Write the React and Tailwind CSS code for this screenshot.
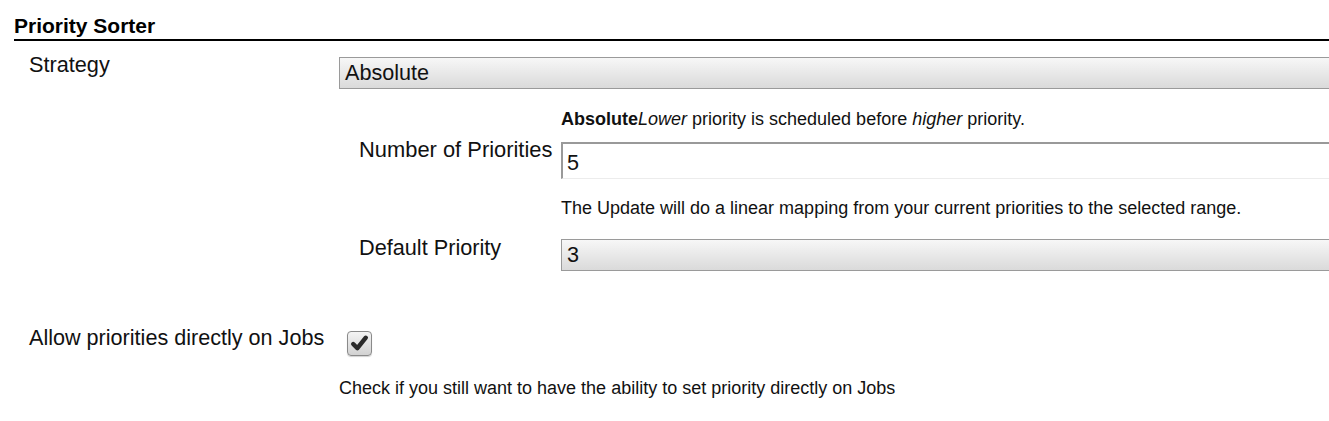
import React from "react";

function Select({ value }) {
  return (
    <div className="h-[32px] flex items-center pl-[5px] pb-[2px] border border-[#9a9a9a] bg-linear-to-b from-[#f7f7f7] to-[#dadada] text-[21.6px] leading-[25px] text-[#111]">
      {value}
    </div>
  );
}

function TextInput({ value }) {
  return (
    <div className="h-[37px] flex items-center pl-[4px] pt-[2px] border-t-2 border-l-2 border-b border-t-[#999] border-l-[#999] border-b-[#ececec] bg-white text-[21.6px] leading-[25px] text-[#111]">
      {value}
    </div>
  );
}

function Checkbox() {
  return (
    <div className="w-[25px] h-[25px] rounded-[4px] border border-[#8a8a8a] bg-linear-to-b from-[#f4f4f4] to-[#d2d2d2] flex items-center justify-center shadow-[0_1px_1px_rgba(0,0,0,0.18)]">
      <svg width="21" height="21" viewBox="0 0 20 20">
        <path d="M4 10.5 L8 14.5 L16 4.5" fill="none" stroke="#2a2a2a" strokeWidth="4.2" strokeLinecap="round" strokeLinejoin="round" />
      </svg>
    </div>
  );
}

export default function App() {
  return (
    <div className="w-[1329px] h-[421px] overflow-hidden bg-white font-['Liberation_Sans',Arial,sans-serif] text-[#111]">
      <div className="w-[1420px] pl-[14px]">
        <div className="pt-[14px] pb-[1px] leading-[24px] text-[21px] font-bold text-black border-b-2 border-black">
          Priority Sorter
        </div>
        <div className="pl-[15px]">
          <div className="flex mt-[11px]">
            <div className="w-[310px] shrink-0 text-[21.7px] leading-[25px]">Strategy</div>
            <div className="flex-1 flex flex-col">
              <div className="mt-[5px]">
                <Select value="Absolute" />
              </div>
              <div className="pl-[20px]">
                <div className="ml-[202px] mt-[20px] text-[18px] leading-[20px]">
                  <b>Absolute</b>
                  <i>Lower</i> priority is scheduled before <i>higher</i> priority.
                </div>
                <div className="flex mt-[8px]">
                  <div className="w-[202px] shrink-0 text-[21.9px] leading-[25px] whitespace-nowrap">Number of Priorities</div>
                  <div className="flex-1 mt-[5px]">
                    <TextInput value="5" />
                  </div>
                </div>
                <div className="ml-[202px] mt-[19px] text-[18px] leading-[20px]">
                  The Update will do a linear mapping from your current priorities to the selected range.
                </div>
                <div className="flex mt-[17px]">
                  <div className="w-[202px] shrink-0 text-[21.7px] leading-[25px]">Default Priority</div>
                  <div className="flex-1 mt-[4px]">
                    <Select value="3" />
                  </div>
                </div>
              </div>
            </div>
          </div>
          <div className="flex mt-[54px]">
            <div className="w-[310px] shrink-0 text-[21.6px] leading-[25px]">Allow priorities directly on Jobs</div>
            <div className="flex-1 flex flex-col">
              <div className="mt-[6px] ml-[8px]">
                <Checkbox />
              </div>
              <div className="mt-[22px] text-[18px] leading-[20px]">
                Check if you still want to have the ability to set priority directly on Jobs
              </div>
            </div>
          </div>
        </div>
      </div>
    </div>
  );
}
